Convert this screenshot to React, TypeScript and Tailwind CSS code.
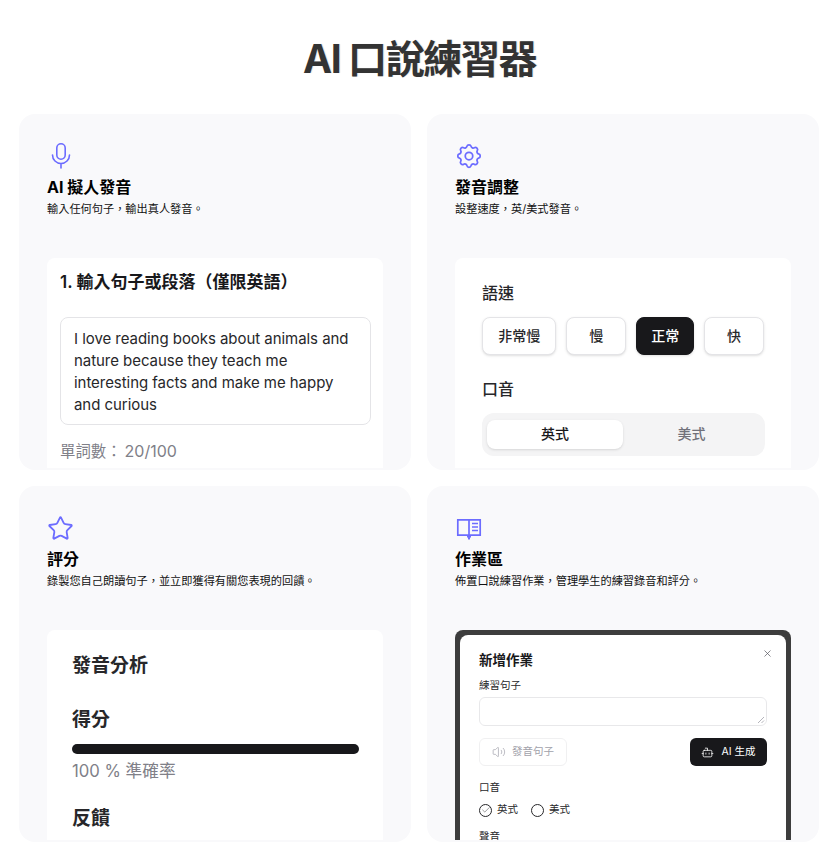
import { Star, X, Volume2, Bot, Check } from "lucide-react";
import { TbSettings } from "react-icons/tb";
import type { ReactNode } from "react";

const FONT = "font-['Inter','Noto_Sans_CJK_TC','Noto_Sans_CJK_SC',sans-serif]";

function MicIcon() {
  return (
    <svg viewBox="0 0 28 28" className="h-7 w-7" fill="none" stroke="currentColor" strokeWidth="1.6" strokeLinecap="round">
      <rect x="9.8" y="1.8" width="8.4" height="15.4" rx="4.2" />
      <path d="M5.5 13a8.5 8.5 0 0 0 17 0M14 21.5V26" />
    </svg>
  );
}

function BookIcon() {
  return (
    <svg viewBox="0 0 28 28" className="h-7 w-7" fill="none" stroke="currentColor" strokeWidth="1.7">
      <path d="M2.8 5.8H14v15.4H2.8zM14 5.8h11.2v15.4H14z" />
      <path d="M17 9.5h6M17 13h6M17 16.5h6" />
      <path d="M12 21.5h4L14 25.5z" fill="currentColor" strokeWidth="1" />
    </svg>
  );
}

function FeatureCard({
  icon,
  title,
  desc,
  children,
}: {
  icon: ReactNode;
  title: string;
  desc: string;
  children: ReactNode;
}) {
  return (
    <div className="h-[356px] overflow-hidden rounded-2xl bg-[#f9f9fb] px-7 pt-7">
      <div className="flex h-7 items-center text-[#6c6cff]">{icon}</div>
      <h3 className="mt-[5px] text-base leading-6 font-bold text-black">{title}</h3>
      <p className="mt-[2px] text-[11.2px] leading-4 text-[#111]">{desc}</p>
      <div className="mt-[41px] h-[210px] overflow-hidden rounded-t-lg bg-white">{children}</div>
    </div>
  );
}

function SpeedButton({ label, active, width }: { label: string; active?: boolean; width: string }) {
  return (
    <div
      className={`flex h-[38px] items-center justify-center rounded-lg border text-sm font-medium shadow-sm ${width} ${
        active ? "border-[#18181b] bg-[#18181b] text-white" : "border-[#e4e4e7] bg-white text-[#27272a]"
      }`}
    >
      {label}
    </div>
  );
}

export default function App() {
  return (
    <div className={`min-h-screen bg-white ${FONT}`}>
      <h1 className="pt-[32px] pb-[28px] pl-3 text-center text-[39px] leading-[54px] font-bold tracking-[-1.4px] text-[#333] [text-shadow:1px_0_1px_rgba(0,0,0,0.12)]">
        AI 口說練習器
      </h1>

      <div className="grid grid-cols-2 gap-4 px-[19px] pr-2">
        <FeatureCard icon={<MicIcon />} title="AI 擬人發音" desc="輸入任何句子，輸出真人發音。">
          <div className="px-[13px] pt-[12px]">
            <h4 className="text-[17px] leading-6 font-semibold text-[#18181b]">1. 輸入句子或段落（僅限英語）</h4>
            <div className="mt-[23px] h-[108px] w-[311px] rounded-lg border border-[#e4e4e7] px-[13px] py-[10px] text-[15px] leading-[22px] tracking-[-0.05px] text-[#27272a]">
              I love reading books about animals and nature because they teach me interesting facts and make me happy
              and curious
            </div>
            <div className="mt-[14px] flex items-baseline gap-[3px] leading-6 text-[#808088]">
              <span className="text-[15.4px]">單詞數：</span>
              <span className="text-base">20/100</span>
            </div>
          </div>
        </FeatureCard>

        <FeatureCard icon={<TbSettings size={30} strokeWidth={1.4} className="-ml-[1px]" />} title="發音調整" desc="設整速度，英/美式發音。">
          <div className="px-[27px] pt-[23px]">
            <div className="text-base leading-6 font-medium text-[#27272a]">語速</div>
            <div className="mt-[12px] flex gap-[10px]">
              <SpeedButton label="非常慢" width="w-[74.5px]" />
              <SpeedButton label="慢" width="w-[60px]" />
              <SpeedButton label="正常" active width="w-[58px]" />
              <SpeedButton label="快" width="w-[60px]" />
            </div>
            <div className="mt-[22px] text-base leading-6 font-medium text-[#27272a]">口音</div>
            <div className="mt-[12px] flex h-[43px] w-[283px] items-center rounded-xl bg-[#f4f4f5] px-[5px] pb-[1px]">
              <div className="flex h-[29px] w-[136px] items-center justify-center rounded-lg bg-white text-sm font-medium text-[#18181b] shadow-sm">
                英式
              </div>
              <div className="flex h-[29px] flex-1 items-center justify-center text-sm font-medium text-[#71717a]">
                美式
              </div>
            </div>
          </div>
        </FeatureCard>

        <FeatureCard icon={<Star size={27} strokeWidth={1.6} />} title="評分" desc="錄製您自己朗讀句子，並立即獲得有關您表現的回饋。">
          <div className="px-[25px] pt-[22px]">
            <h4 className="text-[19px] leading-7 font-semibold text-[#27272a]">發音分析</h4>
            <h4 className="mt-[26px] text-[19px] leading-7 font-semibold text-[#27272a]">得分</h4>
            <div className="mt-[10px] h-[10px] w-[287px] rounded-full bg-[#18181b]" />
            <div className="mt-[5px] text-[16.7px] leading-6 text-[#808088]">100 % 準確率</div>
            <h4 className="mt-[22px] text-[19px] leading-7 font-semibold text-[#27272a]">反饋</h4>
          </div>
        </FeatureCard>

        <FeatureCard icon={<BookIcon />} title="作業區" desc="佈置口說練習作業，管理學生的練習錄音和評分。">
          <div className="h-full bg-[#3d3d3d] px-[5px] pt-[5px]">
            <div className="relative h-full rounded-t-lg bg-white px-[19px] pt-[15px]">
              <X size={11} strokeWidth={1.5} className="absolute top-[13px] right-[13px] text-[#52525b]" />
              <div className="text-[13.5px] leading-[20px] font-semibold text-[#18181b]">新增作業</div>
              <div className="mt-[8px] text-[10.5px] leading-[16px] text-[#27272a]">練習句子</div>
              <div className="relative mt-[3px] h-[29px] w-[288px] rounded-md border border-[#e8e8ea]">
                <svg viewBox="0 0 8 8" className="absolute right-[1px] bottom-[1px] h-2 w-2 text-[#a1a1aa]" fill="none" stroke="currentColor" strokeWidth="0.8">
                  <path d="M1 7 7 1M4.5 7 7 4.5" />
                </svg>
              </div>
              <div className="mt-3 flex w-[288px] items-center justify-between">
                <div className="flex h-[28px] w-[88px] items-center justify-center gap-[6px] rounded-md border border-[#f0f0f1] text-[10.5px] text-[#a1a1aa]">
                  <Volume2 size={14} strokeWidth={1.2} />
                  <span>發音句子</span>
                </div>
                <div className="flex h-[28px] w-[77px] items-center justify-center gap-[7px] rounded-md bg-[#18181b] text-[10.5px] text-white">
                  <Bot size={13} strokeWidth={1.5} />
                  <span>AI 生成</span>
                </div>
              </div>
              <div className="mt-[14px] text-[10.5px] leading-[16px] text-[#27272a]">口音</div>
              <div className="mt-[6px] flex items-center text-[10.5px] leading-[16px] text-[#27272a]">
                <span className="flex h-[13px] w-[13px] items-center justify-center rounded-full border border-[#27272a]">
                  <Check size={10} strokeWidth={1.1} />
                </span>
                <span className="ml-[5px]">英式</span>
                <span className="ml-[13px] h-[13px] w-[13px] rounded-full border border-[#27272a]" />
                <span className="ml-[5px]">美式</span>
              </div>
              <div className="mt-[11px] text-[10.5px] leading-[16px] text-[#27272a]">聲音</div>
            </div>
          </div>
        </FeatureCard>
      </div>
    </div>
  );
}
